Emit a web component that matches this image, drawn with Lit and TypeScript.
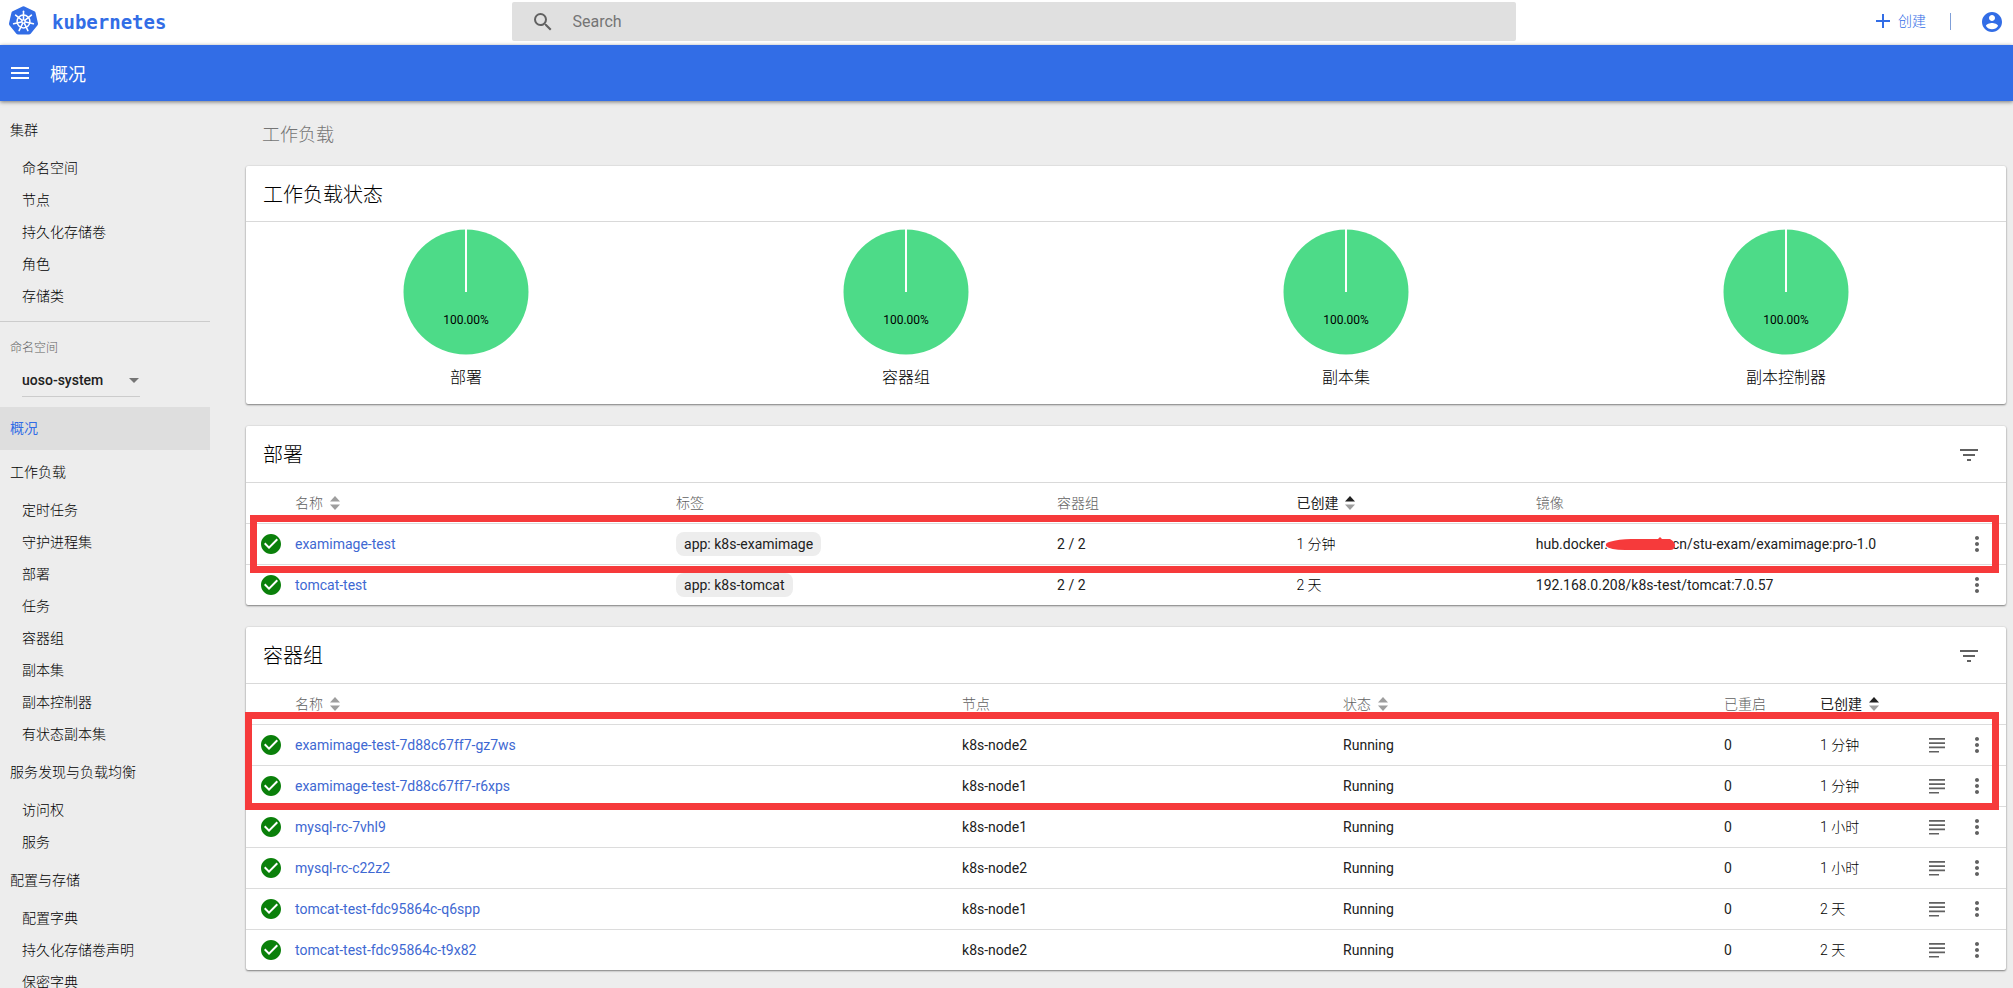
import { LitElement, html, css, svg, nothing } from "lit";
import { customElement } from "lit/decorators.js";
import { classMap } from "lit/directives/class-map.js";

type NavItem = { text: string; kind: "group" | "item" };

const clusterNav: NavItem[] = [
  { text: "集群", kind: "group" },
  { text: "命名空间", kind: "item" },
  { text: "节点", kind: "item" },
  { text: "持久化存储卷", kind: "item" },
  { text: "角色", kind: "item" },
  { text: "存储类", kind: "item" },
];

const workloadNav: NavItem[] = [
  { text: "工作负载", kind: "group" },
  { text: "定时任务", kind: "item" },
  { text: "守护进程集", kind: "item" },
  { text: "部署", kind: "item" },
  { text: "任务", kind: "item" },
  { text: "容器组", kind: "item" },
  { text: "副本集", kind: "item" },
  { text: "副本控制器", kind: "item" },
  { text: "有状态副本集", kind: "item" },
  { text: "服务发现与负载均衡", kind: "group" },
  { text: "访问权", kind: "item" },
  { text: "服务", kind: "item" },
  { text: "配置与存储", kind: "group" },
  { text: "配置字典", kind: "item" },
  { text: "持久化存储卷声明", kind: "item" },
  { text: "保密字典", kind: "item" },
];

const charts = ["部署", "容器组", "副本集", "副本控制器"];

const deployments = [
  { name: "examimage-test", label: "app: k8s-examimage", pods: "2 / 2", age: "1 分钟", host: "hub.docker.", hidden: true, image: "cn/stu-exam/examimage:pro-1.0" },
  { name: "tomcat-test", label: "app: k8s-tomcat", pods: "2 / 2", age: "2 天", host: "", hidden: false, image: "192.168.0.208/k8s-test/tomcat:7.0.57" },
];

const pods = [
  { name: "examimage-test-7d88c67ff7-gz7ws", node: "k8s-node2", age: "1 分钟" },
  { name: "examimage-test-7d88c67ff7-r6xps", node: "k8s-node1", age: "1 分钟" },
  { name: "mysql-rc-7vhl9", node: "k8s-node1", age: "1 小时" },
  { name: "mysql-rc-c22z2", node: "k8s-node2", age: "1 小时" },
  { name: "tomcat-test-fdc95864c-q6spp", node: "k8s-node1", age: "2 天" },
  { name: "tomcat-test-fdc95864c-t9x82", node: "k8s-node2", age: "2 天" },
];

const icon = (path: string, size = 24) =>
  html`<svg class="icon" width=${size} height=${size} viewBox="0 0 24 24" fill="currentColor" aria-hidden="true"><path d=${path}></path></svg>`;

const paths = {
  search: "M15.5 14h-.79l-.28-.27A6.47 6.47 0 0 0 16 9.5 6.5 6.5 0 1 0 9.5 16c1.61 0 3.09-.59 4.23-1.57l.27.28v.79l5 4.99L20.49 19l-4.99-5zm-6 0C7.01 14 5 11.99 5 9.5S7.01 5 9.5 5 14 7.01 14 9.5 11.99 14 9.5 14z",
  menu: "M3 18h18v-2H3v2zm0-5h18v-2H3v2zm0-7v2h18V6H3z",
  add: "M19 13h-6v6h-2v-6H5v-2h6V5h2v6h6v2z",
  user: "M12 2C6.48 2 2 6.48 2 12s4.48 10 10 10 10-4.48 10-10S17.52 2 12 2zm0 3c1.66 0 3 1.34 3 3s-1.34 3-3 3-3-1.34-3-3 1.34-3 3-3zm0 14.2a7.2 7.2 0 0 1-6-3.22c.03-1.99 4-3.08 6-3.08 1.99 0 5.97 1.09 6 3.08a7.2 7.2 0 0 1-6 3.22z",
  check: "M12 2C6.48 2 2 6.48 2 12s4.48 10 10 10 10-4.48 10-10S17.52 2 12 2zm-2 15l-5-5 1.41-1.41L10 14.17l7.59-7.59L19 8l-9 9z",
  filter: "M10 18h4v-2h-4v2zM3 6v2h18V6H3zm3 7h12v-2H6v2z",
  more: "M12 8c1.1 0 2-.9 2-2s-.9-2-2-2-2 .9-2 2 .9 2 2 2zm0 2c-1.1 0-2 .9-2 2s.9 2 2 2 2-.9 2-2-.9-2-2-2zm0 6c-1.1 0-2 .9-2 2s.9 2 2 2 2-.9 2-2-.9-2-2-2z",
  logs: "M4 5h16v1.7H4zM4 9.3h16v1.7H4zM4 13.6h16v1.7H4zM4 17.9h10v1.7H4z",
};

@customElement("app-root")
export class AppRoot extends LitElement {
  static styles = css`
    :host {
      display: block;
      height: 100vh;
      overflow: hidden;
      background: #ededed;
      color: #212121;
      font-family: Roboto, "Noto Sans CJK SC", sans-serif;
      font-size: 14px;
      line-height: 20px;
    }
    * { box-sizing: border-box; }
    button, input, select { font: inherit; color: inherit; border: 0; background: none; padding: 0; margin: 0; }
    button { display: inline-flex; align-items: center; cursor: pointer; }
    a { color: inherit; text-decoration: none; }
    ul { list-style: none; margin: 0; padding: 0; }
    h1, h2, h3 { margin: 0; font-weight: 300; }
    .icon { display: block; flex: none; }
    .page { display: flex; flex-direction: column; height: 100%; }

    .topbar { display: flex; align-items: center; height: 45px; flex: none; background: #fff; padding: 0 9px 2px 8px; }
    .side { flex: 1 1 0; display: flex; align-items: center; }
    .brand { display: flex; align-items: center; gap: 13px; color: #326de6; }
    .wordmark { font: 700 19px/24px "DejaVu Sans Mono", monospace; }
    .search { flex: 0 1 1004px; display: flex; align-items: center; height: 39px; margin: 0 0 0 15px; background: #e0e0e0; gap: 18px; padding: 0 19px; color: #616161; border-radius: 2px; }
    .search input { flex: 1; outline: none; font-size: 16px; }
    .search input::placeholder { color: #757575; opacity: 1; }
    .actions { justify-content: flex-end; color: #326de6; }
    .create { gap: 3px; padding-bottom: 2px; font-weight: 300; }
    .rule { width: 1px; height: 17px; background: #7f9fd8; margin: 0 29px 0 24px; }

    .bluebar { display: flex; align-items: center; gap: 18px; height: 56px; flex: none; padding: 0 8px; background: #326de6; color: #fff; box-shadow: 0 1px 4px rgba(0, 0, 0, 0.5); z-index: 1; }
    .bluebar h1 { font-size: 18px; line-height: 24px; font-weight: 400; padding-top: 4px; }

    .body { display: flex; flex: 1; min-height: 0; }
    .sidebar { flex: none; width: 210px; overflow: hidden; }
    .nav { padding-top: 7px; font-weight: 300; color: #000; }
    .nav a { display: block; padding-left: 22px; line-height: 32px; }
    .nav .group { padding-left: 10px; line-height: 44px; }
    .nav.cluster { padding-bottom: 9px; border-bottom: 1px solid #ccc; }
    .ns { display: flex; flex-direction: column; padding: 18px 10px 10px; }
    .ns label { font-size: 12px; line-height: 16px; color: #616161; font-weight: 300; }
    .picker { display: flex; align-items: center; width: 118px; margin: 8px 0 0 12px; height: 33px; border-bottom: 1px solid #ccc; }
    .picker select { flex: 1; appearance: none; font-weight: 500; outline: none; }
    .caret { width: 0; border: 5px solid transparent; border-top-color: #757575; border-bottom: 0; margin-right: 1px; }
    .current { display: block; height: 43px; line-height: 42px; padding-left: 10px; background: #dedede; color: #326de6; }
    .nav.more { padding-top: 0; }

    .content { flex: 1; min-width: 0; padding: 22px 7px 0 36px; overflow: hidden; }
    .content > h2 { font-size: 18px; line-height: 24px; color: #757575; padding-left: 16px; margin-bottom: 19px; }
    .card { position: relative; background: #fff; border-radius: 2px; margin-bottom: 22px; box-shadow: 0 1px 2px rgba(0, 0, 0, 0.45), 0 0 2px rgba(0, 0, 0, 0.12); }
    .head { display: flex; align-items: center; justify-content: space-between; height: 57px; padding: 2px 25px 0 17px; border-bottom: 1px solid #d9d9d9; color: #616161; }
    .head h3 { font-size: 20px; line-height: 28px; color: #000; }
    .status .head { height: 56px; }
    .charts { display: grid; grid-template-columns: repeat(4, 1fr); padding: 7px 0 14px; }
    .charts figure { margin: 0; display: flex; flex-direction: column; align-items: center; gap: 11px; }
    .charts figcaption { font-size: 16px; line-height: 24px; font-weight: 300; color: #000; }
    .pie { display: block; font-size: 12px; }

    table { width: 100%; border-collapse: separate; border-spacing: 0; table-layout: fixed; }
    th, td { padding: 0; height: 41px; text-align: left; font-weight: 400; vertical-align: middle; white-space: nowrap; }
    td { border-top: 1px solid #dcdcdc; }
    th { height: 40px; color: #616161; font-weight: 300; }
    th button { gap: 7px; height: 20px; }
    .sorted { color: #212121; font-weight: 400; }
    td a { color: #3e68d2; }
    .age { font-weight: 300; color: #000; }
    .c-icon { width: 49px; }
    .c-wide { width: 37.9%; }
    .c-mid { width: 21.65%; }
    .c-age { width: 13.6%; }
    .c-count { width: 96px; }
    .c-logs { width: 40px; }
    .c-menu { width: 49px; }
    .ok { color: #0a800a; padding-left: 13px; }
    .tool { color: #616161; }
    .tool button { display: flex; width: 40px; justify-content: center; }
    .chip { display: inline-block; padding: 0 8px; border-radius: 8px; background: #ededed; line-height: 24px; }
    .masked { display: inline-flex; align-items: center; vertical-align: top; }
    .scribble { display: block; margin: 0 -3px 0 -3px; z-index: 1; }
    .frame { position: absolute; right: 7px; border: 7px solid #f63a3b; pointer-events: none; }
    .frame.one { top: 89px; left: 4px; height: 58px; }
    .frame.two { top: 85px; left: -1px; height: 98px; }
  `;

  private logo() {
    const spokes = [0, 1, 2, 3, 4, 5, 6].map((i) => (i * 360) / 7);
    return html`<svg width="31" height="31" viewBox="0 0 30 30" aria-hidden="true">
      <path fill="#326de6" d="M14.1.4q.9-.4 1.8 0l9.6 4.600q.9.5 1.100 1.400l2.400 10.400q.2 1-.4 1.800l-6.700 8.300q-.6.800-1.600.8H9.700q-1 0-1.600-.8L1.400 18.600q-.6-.8-.4-1.800L3.400 6.400q.2-.9 1.100-1.400z"></path>
      <g fill="none" stroke="#fff" stroke-width="1.5">
        <circle cx="15" cy="15" r="6.2"></circle>
        ${spokes.map((a) => svg`<path stroke-linecap="round" d="M15 13V5.200" transform="rotate(${a} 15 15)"></path>`)}
      </g>
      <circle cx="15" cy="15" r="2.2" fill="#fff"></circle>
      <circle cx="15" cy="15" r="0.9" fill="#326de6"></circle>
    </svg>`;
  }

  private sortable(text: string, active = false) {
    return html`<button type="button" class=${classMap({ sorted: active })}>${text}
      <svg class="icon" width="10" height="14" viewBox="0 0 10 14" aria-hidden="true">
        <path d="M0 5.500 5 0l5 5.500z" fill=${active ? "#212121" : "#9e9e9e"}></path>
        <path d="M0 8.500h10L5 14z" fill="#9e9e9e"></path>
      </svg></button>`;
  }

  private links(items: NavItem[]) {
    return html`<ul>${items.map((n) => html`<li><a href="#" class=${classMap({ group: n.kind === "group" })}>${n.text}</a></li>`)}</ul>`;
  }

  private menuCell() {
    return html`<td class="tool"><button type="button" aria-label="操作">${icon(paths.more)}</button></td>`;
  }

  private statusCell() {
    return html`<td class="ok">${icon(paths.check)}</td>`;
  }

  private head(title: string, filter = true) {
    return html`<div class="head"><h3>${title}</h3>
      ${filter ? html`<button type="button" aria-label="筛选">${icon(paths.filter)}</button>` : nothing}</div>`;
  }

  render() {
    return html`<div class="page">
      <header class="topbar">
        <div class="side"><a class="brand" href="#">${this.logo()}<span class="wordmark">kubernetes</span></a></div>
        <label class="search">${icon(paths.search)}<input type="text" placeholder="Search" aria-label="Search" /></label>
        <div class="side actions">
          <button type="button" class="create">${icon(paths.add)}创建</button>
          <span class="rule"></span>
          <button type="button" aria-label="用户">${icon(paths.user)}</button>
        </div>
      </header>
      <div class="bluebar"><button type="button" aria-label="菜单">${icon(paths.menu)}</button><h1>概况</h1></div>
      <div class="body">
        <aside class="sidebar">
          <nav class="nav cluster">${this.links(clusterNav)}</nav>
          <div class="ns">
            <label for="namespace">命名空间</label>
            <div class="picker"><select id="namespace"><option>uoso-system</option></select><span class="caret"></span></div>
          </div>
          <a class="current" href="#" aria-current="page">概况</a>
          <nav class="nav more">${this.links(workloadNav)}</nav>
        </aside>
        <main class="content">
          <h2>工作负载</h2>
          <section class="card status">
            ${this.head("工作负载状态", false)}
            <div class="charts">
              ${charts.map((c) => html`<figure>
                <svg class="pie" width="126" height="126" viewBox="0 0 126 126">
                  <circle cx="63" cy="63" r="62.5" fill="#4ddb88"></circle>
                  <path d="M63 0v63" stroke="#fff" stroke-width="2"></path>
                  <text x="63" y="95" text-anchor="middle">100.00%</text>
                </svg>
                <figcaption>${c}</figcaption>
              </figure>`)}
            </div>
          </section>
          <section class="card">
            ${this.head("部署")}
            <table>
              <thead><tr>
                <th class="c-icon"></th><th class="c-mid">${this.sortable("名称")}</th><th class="c-mid">标签</th>
                <th class="c-age">容器组</th><th class="c-age">${this.sortable("已创建", true)}</th><th>镜像</th><th class="c-menu"></th>
              </tr></thead>
              <tbody>${deployments.map((d) => html`<tr>
                ${this.statusCell()}
                <td><a href="#">${d.name}</a></td>
                <td><span class="chip">${d.label}</span></td>
                <td>${d.pods}</td><td class="age">${d.age}</td>
                <td>${d.hidden
                  ? html`<span class="masked">${d.host}<svg class="scribble" width="70" height="14" viewBox="0 0 70 14" aria-hidden="true"><path fill="#f63a3b" d="M4 5Q14 2 26 2L53 2l2-2 2 2 8 0q5 3 5 6 0 5-5 5L20 13Q5 13 1 9 0 6 4 5z"></path></svg>${d.image}</span>`
                  : d.image}</td>
                ${this.menuCell()}
              </tr>`)}</tbody>
            </table>
            <div class="frame one"></div>
          </section>
          <section class="card">
            ${this.head("容器组")}
            <table>
              <thead><tr>
                <th class="c-icon"></th><th class="c-wide">${this.sortable("名称")}</th><th class="c-mid">节点</th>
                <th class="c-mid">${this.sortable("状态")}</th><th class="c-count">已重启</th><th>${this.sortable("已创建", true)}</th>
                <th class="c-logs"></th><th class="c-menu"></th>
              </tr></thead>
              <tbody>${pods.map((p) => html`<tr>
                ${this.statusCell()}
                <td><a href="#">${p.name}</a></td>
                <td>${p.node}</td><td>Running</td><td>0</td><td class="age">${p.age}</td>
                <td class="tool"><button type="button" aria-label="日志">${icon(paths.logs)}</button></td>
                ${this.menuCell()}
              </tr>`)}</tbody>
            </table>
            <div class="frame two"></div>
          </section>
        </main>
      </div>
    </div>`;
  }
}
